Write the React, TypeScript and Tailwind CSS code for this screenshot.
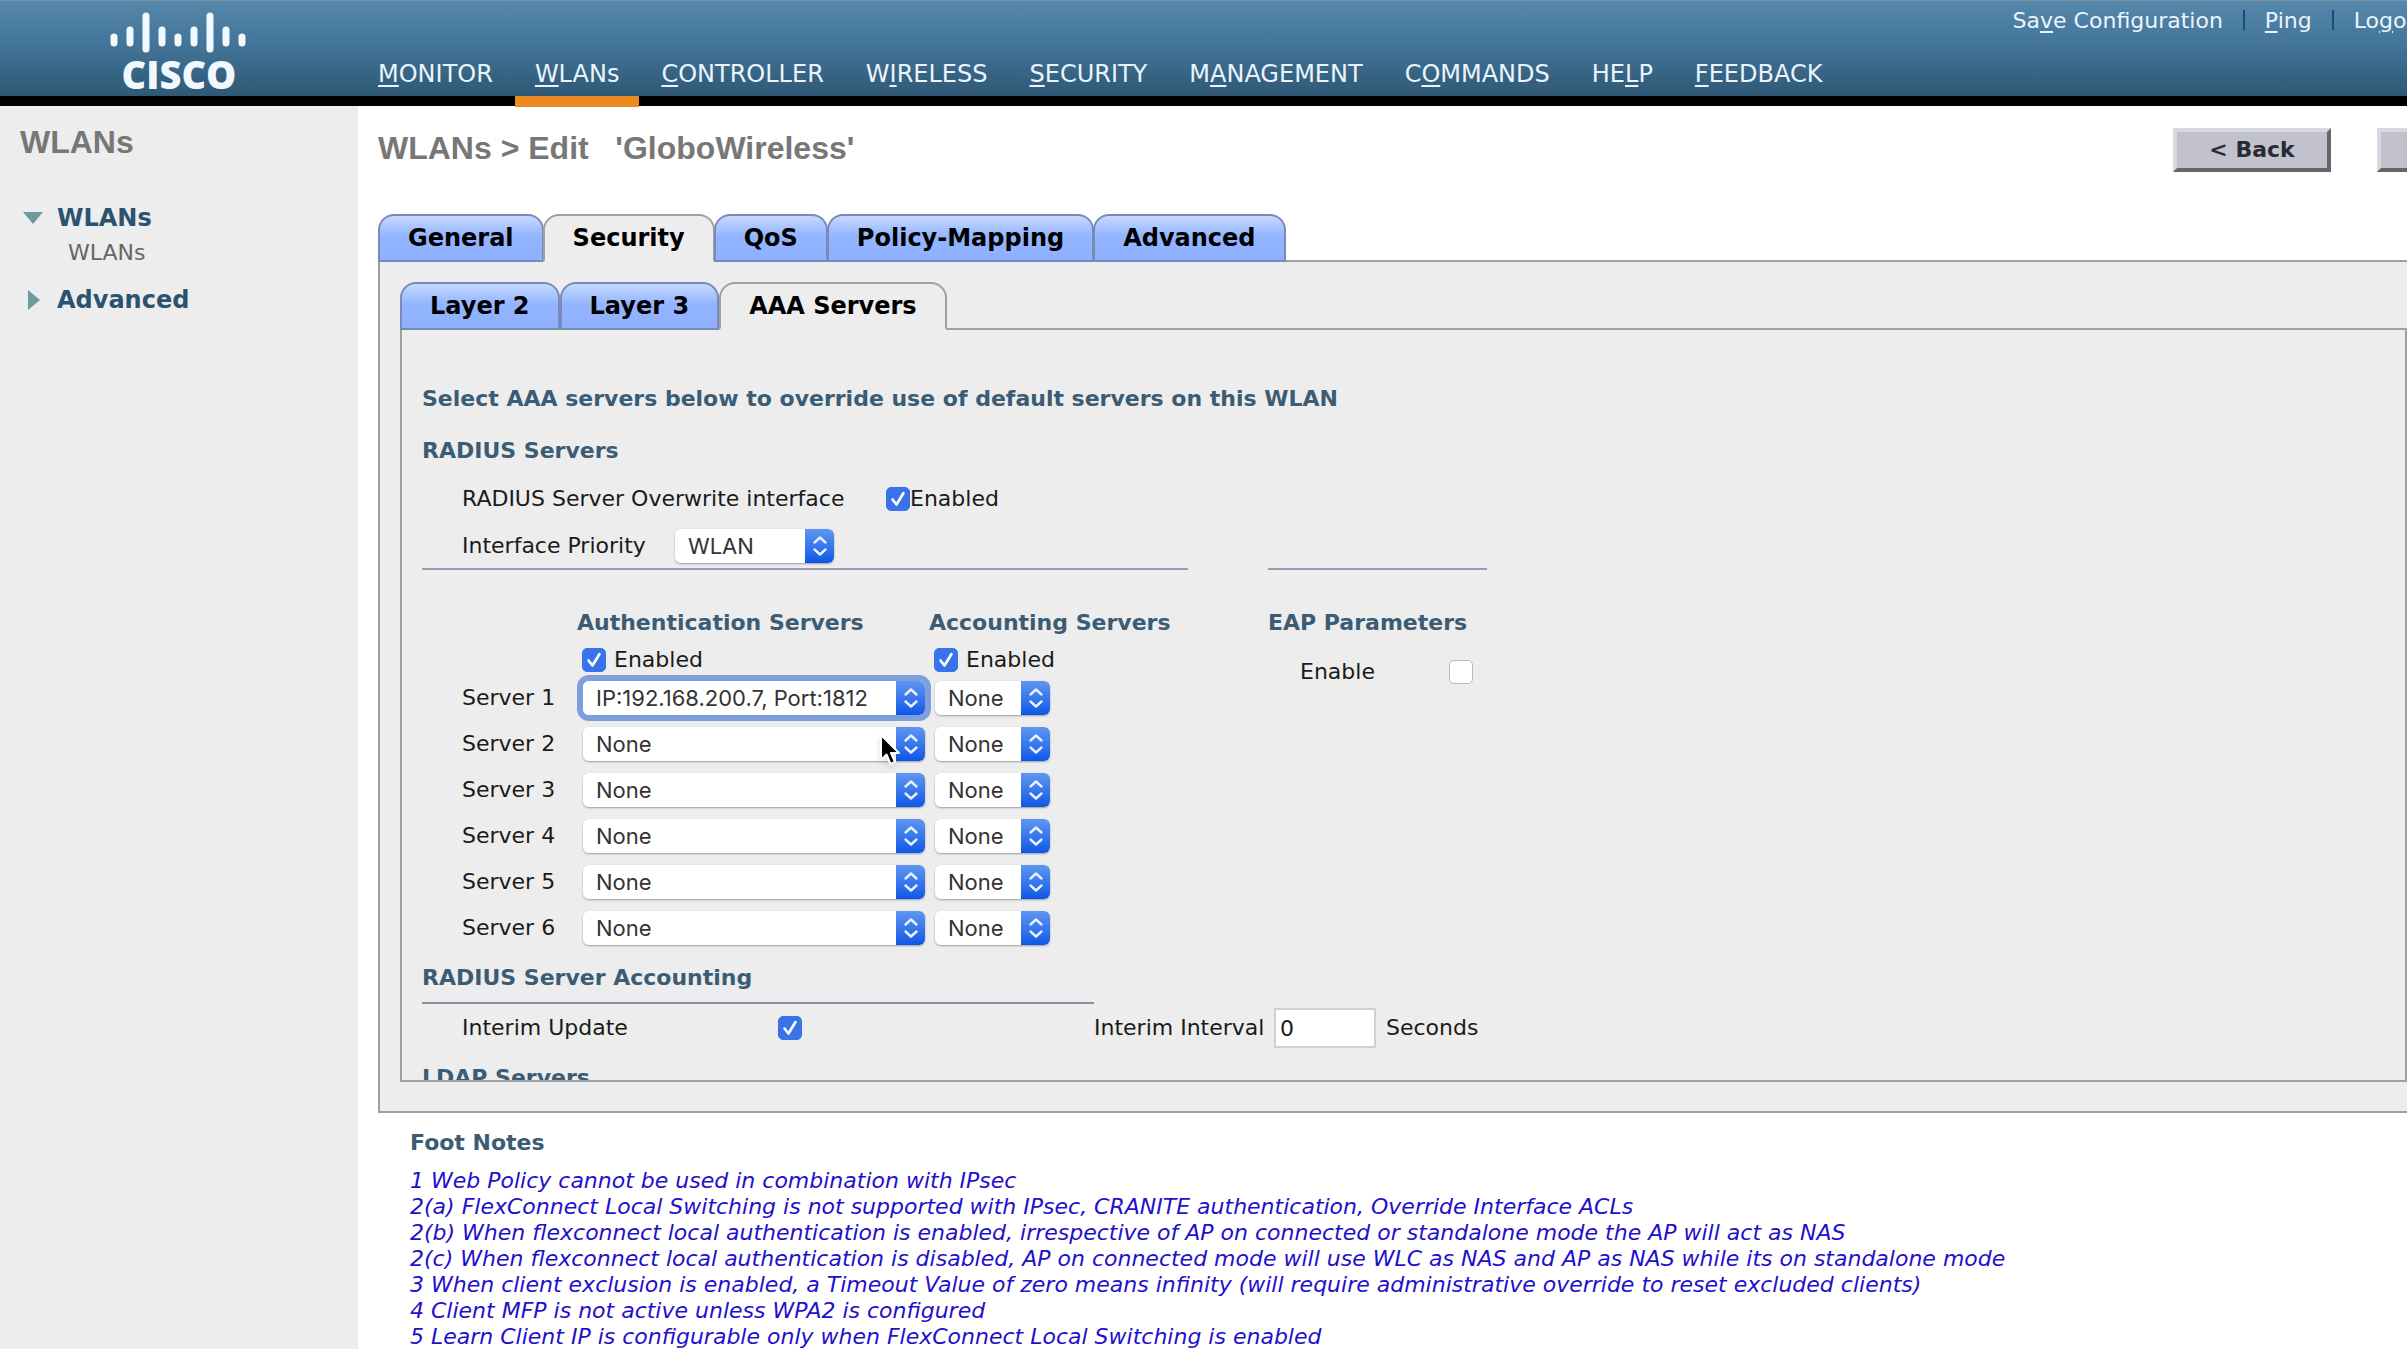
import React from "react";

type NavItem = { before: string; key: string; after: string; active?: boolean };

const NAV: NavItem[] = [
  { before: "", key: "M", after: "ONITOR" },
  { before: "", key: "W", after: "LANs", active: true },
  { before: "", key: "C", after: "ONTROLLER" },
  { before: "W", key: "I", after: "RELESS" },
  { before: "", key: "S", after: "ECURITY" },
  { before: "M", key: "A", after: "NAGEMENT" },
  { before: "C", key: "O", after: "MMANDS" },
  { before: "HE", key: "L", after: "P" },
  { before: "", key: "F", after: "EEDBACK" },
];

const NOTES = [
  "1 Web Policy cannot be used in combination with IPsec",
  "2(a) FlexConnect Local Switching is not supported with IPsec, CRANITE authentication, Override Interface ACLs",
  "2(b) When flexconnect local authentication is enabled, irrespective of AP on connected or standalone mode the AP will act as NAS",
  "2(c) When flexconnect local authentication is disabled, AP on connected mode will use WLC as NAS and AP as NAS while its on standalone mode",
  "3 When client exclusion is enabled, a Timeout Value of zero means infinity (will require administrative override to reset excluded clients)",
  "4 Client MFP is not active unless WPA2 is configured",
  "5 Learn Client IP is configurable only when FlexConnect Local Switching is enabled",
];

function Hotkey({ before, k, after }: { before: string; k: string; after: string }) {
  return (
    <>
      {before}
      <span className="underline decoration-2 underline-offset-[3px]">{k}</span>
      {after}
    </>
  );
}

function Logo() {
  const bars: [number, number, number][] = [
    [3, 21, 34], [19, 14, 34], [35, 0, 40], [51, 14, 34], [67, 21, 34],
    [83, 14, 34], [99, 0, 40], [115, 14, 34], [131, 21, 34],
  ];
  return (
    <svg className="overflow-visible" width="134" height="84" viewBox="0 0 134 84" role="img" aria-label="Cisco">
      {bars.map(([x, y1, y2]) => (
        <line key={x} x1={x} x2={x} y1={y1 + 4} y2={y2 - 3} stroke="#f1f8fe" strokeWidth="7" strokeLinecap="round" />
      ))}
      <text x="68" y="77" textAnchor="middle" fontSize="38" fontWeight="800" fill="#f1f8fe" fontFamily="'Open Sans', sans-serif">
        CISCO
      </text>
    </svg>
  );
}

function Tabs({ items, active, label, spacing = "" }: { items: string[]; active: string; label: string; spacing?: string }) {
  return (
    <div role="tablist" aria-label={label} className={"relative -mb-0.5 flex pr-px " + spacing}>
      {items.map((t) => (
        <button
          key={t}
          role="tab"
          aria-selected={t === active}
          className={
            "-mr-px h-12 rounded-t-[16px] border-2 px-7 pb-px text-2xl font-bold leading-9 text-black " +
            (t === active
              ? "border-[#a0a0a0] border-b-[#ededed] bg-[#ededed]"
              : "border-[#7a8ab8] bg-linear-to-b from-[#c0d6ff] from-5% via-[#94b5ff] via-45% to-[#8db0ff]")
          }
        >
          {t}
        </button>
      ))}
    </div>
  );
}

function Check({ id, checked = false }: { id: string; checked?: boolean }) {
  return (
    <span className="grid size-6 shrink-0">
      <input
        id={id}
        type="checkbox"
        defaultChecked={checked}
        className="peer col-start-1 row-start-1 size-6 appearance-none rounded-[5px] border border-[#b9b9b9] bg-white checked:border-[#3a72ea] checked:bg-[#3a72ea]"
      />
      <svg
        viewBox="0 0 24 24"
        className="pointer-events-none col-start-1 row-start-1 hidden size-6 peer-checked:block"
        fill="none"
        stroke="white"
        strokeWidth="2.6"
        strokeLinecap="round"
        strokeLinejoin="round"
        aria-hidden="true"
      >
        <path d="M6.5 12.5 10.5 17.5 17.5 6" />
      </svg>
    </span>
  );
}

function Select({ id, label, value, width, focused = false }: { id: string; label?: string; value: string; width: string; focused?: boolean }) {
  return (
    <span
      className={
        "relative block h-[34px] rounded-md " +
        width +
        (focused ? " shadow-[0_0_0_6px_#7f9fdc]" : " shadow-[0_1px_2px_rgba(0,0,0,0.35)]")
      }
    >
      <select
        id={id}
        aria-label={label}
        defaultValue={value}
        className="h-full w-full appearance-none rounded-md bg-white pl-[13px] pr-8 font-['Inter',sans-serif] text-[22px] leading-[34px] text-[#333] outline-none"
      >
        <option>{value}</option>
      </select>
      <span className="pointer-events-none absolute inset-y-0 right-0 flex w-[29px] items-center justify-center rounded-r-md bg-linear-to-b from-[#5f96f0] to-[#0d56e6]">
        <svg width="16" height="22" viewBox="0 0 16 22" fill="none" stroke="#e6f0ff" strokeWidth="2.4" strokeLinecap="round" strokeLinejoin="round" aria-hidden="true">
          <path d="M2.5 7.5 8 2.5 13.5 7.5M2.5 14.5 8 19.5 13.5 14.5" />
        </svg>
      </span>
    </span>
  );
}

function Pointer() {
  return (
    <svg className="pointer-events-none absolute left-[302px] top-3 z-10 drop-shadow-md" width="22" height="34" viewBox="0 0 22 34" aria-hidden="true">
      <path d="M2 2 2 27 7.5 21.5 11.5 31 16 29 12 20 20 20Z" fill="#000" stroke="#fff" strokeWidth="2" strokeLinejoin="round" />
    </svg>
  );
}

function PushButton({ children }: { children: React.ReactNode }) {
  return (
    <button className="h-11 w-[158px] shrink-0 border-4 border-b-[#666] border-l-[#d8d8e0] border-r-[#666] border-t-[#d8d8e0] bg-[#c2c2cf] text-[22px] font-bold leading-9 text-[#2a2a35]">
      {children}
    </button>
  );
}

function Header() {
  return (
    <header className="border-b-[10px] border-black">
      <div className="flex h-24 border-t border-[#7b95a3] bg-linear-to-b from-[#5588ab] via-[#43759a] via-45% to-[#2f5875] text-[#eaf4fc]">
        <div className="flex w-[358px] shrink-0 pl-[111px] pt-[11px]">
          <Logo />
        </div>
        <div className="flex min-w-0 grow flex-col justify-between">
          <div className="-mr-[22px] flex h-[38px] items-center justify-end gap-5 whitespace-nowrap text-[22px]">
            <a href="#save"><Hotkey before="Sa" k="v" after="e Configuration" /></a>
            <span className="h-5 w-0.5 bg-[#1f4a7c]" />
            <a href="#ping"><Hotkey before="" k="P" after="ing" /></a>
            <span className="h-5 w-0.5 bg-[#1f4a7c]" />
            <a href="#logout"><Hotkey before="Lo" k="g" after="out" /></a>
          </div>
          <nav className="flex gap-0.5 whitespace-nowrap text-2xl leading-[44px]" aria-label="Main">
            {NAV.map((n) => (
              <a
                key={n.key + n.after}
                href={"#" + n.after.toLowerCase()}
                className={
                  "relative px-5 " +
                  (n.active ? "after:absolute after:inset-x-0 after:top-full after:h-[11px] after:bg-[#ea8a1f]" : "")
                }
              >
                <Hotkey before={n.before} k={n.key} after={n.after} />
              </a>
            ))}
          </nav>
        </div>
      </div>
    </header>
  );
}

function Sidebar() {
  return (
    <aside className="w-[358px] shrink-0 bg-[#ededed] pl-5 pt-3.5">
      <h2 className="font-['Liberation_Sans',Arial,sans-serif] text-[32px] font-bold leading-[44px] text-[#777]">WLANs</h2>
      <ul className="pt-[34px]">
        <li>
          <a href="#wlans" className="flex h-10 items-center text-2xl font-bold text-[#2b526f]">
            <svg className="ml-0.5 mr-[13px]" width="22" height="14" viewBox="0 0 22 14" aria-hidden="true">
              <path d="M1 1H21L11 13Z" fill="#6e9a9b" />
            </svg>
            WLANs
          </a>
          <a href="#wlans-list" className="flex h-7 items-center pl-12 text-[22px] text-[#666]">WLANs</a>
        </li>
        <li className="pt-3">
          <a href="#advanced" className="flex h-11 items-center text-2xl font-bold text-[#2b526f]">
            <svg className="ml-[7px] mr-4" width="14" height="22" viewBox="0 0 14 22" aria-hidden="true">
              <path d="M1 1V21L13 11Z" fill="#6e9a9b" />
            </svg>
            Advanced
          </a>
        </li>
      </ul>
    </aside>
  );
}

function ServerTable() {
  return (
    <table className="ml-10 border-collapse text-left">
      <thead>
        <tr className="h-[42px] text-[#3b5c74]">
          <td className="w-[115px] p-0" />
          <th scope="col" className="w-[352px] p-0 font-bold">Authentication Servers</th>
          <th scope="col" className="p-0 font-bold">Accounting Servers</th>
        </tr>
      </thead>
      <tbody>
        <tr className="h-[31px] leading-[31px]">
          <td className="p-0" />
          <td className="p-0 pl-[5px]">
            <label htmlFor="auth-on" className="flex items-center gap-2"><Check id="auth-on" checked />Enabled</label>
          </td>
          <td className="p-0 pl-[5px]">
            <label htmlFor="acct-on" className="flex items-center gap-2"><Check id="acct-on" checked />Enabled</label>
          </td>
        </tr>
        {[1, 2, 3, 4, 5, 6].map((n) => (
          <tr key={n} className="h-[46px]">
            <th scope="row" className="p-0 font-normal">Server {n}</th>
            <td className="relative p-0 pl-1.5">
              <Select id={"auth-" + n} label={"Authentication server " + n} value={n === 1 ? "IP:192.168.200.7, Port:1812" : "None"} width="w-[342px]" focused={n === 1} />
              {n === 2 && <Pointer />}
            </td>
            <td className="p-0 pl-1.5">
              <Select id={"acct-" + n} label={"Accounting server " + n} value="None" width="w-[115px]" />
            </td>
          </tr>
        ))}
      </tbody>
    </table>
  );
}

function AaaPanel() {
  return (
    <div className="h-[754px] overflow-hidden border-2 border-[#a0a0a0] pl-5 pt-[53px] text-[22px] leading-8 text-[#1a1a1a]">
      <h3 className="font-bold text-[#3b5c74]">Select AAA servers below to override use of default servers on this WLAN</h3>
      <h3 className="pt-5 font-bold text-[#3b5c74]">RADIUS Servers</h3>
      <div className="ml-10 mt-2 flex h-12 items-center">
        <label htmlFor="overwrite" className="w-[424px]">RADIUS Server Overwrite interface</label>
        <Check id="overwrite" checked />
        <span>Enabled</span>
      </div>
      <div className="ml-10 flex h-[45px] items-center">
        <label htmlFor="priority" className="w-[213px]">Interface Priority</label>
        <Select id="priority" value="WLAN" width="w-[159px]" />
      </div>
      <div className="flex gap-20">
        <section className="w-[766px] border-t-2 border-[#9a9cb4] pt-8">
          <ServerTable />
        </section>
        <section className="w-[219px] border-t-2 border-[#9a9cb4] pt-8">
          <h3 className="font-bold leading-[42px] text-[#3b5c74]">EAP Parameters</h3>
          <div className="flex h-14 items-center justify-between pl-8 pr-3.5">
            <label htmlFor="eap">Enable</label>
            <Check id="eap" />
          </div>
        </section>
      </div>
      <h3 className="w-[672px] border-b-2 border-[#8494a6] pt-0.5 font-bold leading-[49px] text-[#3b5c74]">RADIUS Server Accounting</h3>
      <div className="ml-10 flex h-12 items-center">
        <label htmlFor="interim" className="w-[316px]">Interim Update</label>
        <div className="w-[316px]"><Check id="interim" checked /></div>
        <label htmlFor="interval" className="w-[180px] whitespace-nowrap">Interim Interval</label>
        <input id="interval" defaultValue="0" className="h-10 w-[102px] border-2 border-[#d0d0d0] bg-white pl-1 outline-none" />
        <span className="pl-2.5">Seconds</span>
      </div>
      <h3 className="font-bold leading-[52px] text-[#3b5c74]">LDAP Servers</h3>
    </div>
  );
}

export default function App() {
  return (
    <div className="flex h-screen flex-col overflow-hidden bg-white font-['DejaVu_Sans',Verdana,sans-serif]">
      <Header />
      <div className="flex min-h-0 grow">
        <Sidebar />
        <main className="min-w-0 grow pl-5">
          <div className="flex items-start justify-between pt-[22px]">
            <h1 className="whitespace-pre font-['Liberation_Sans',Arial,sans-serif] text-[32px] font-bold leading-10 text-[#777]">
              {"WLANs > Edit   'GloboWireless'"}
            </h1>
            <div className="-mr-[128px] flex gap-[46px]">
              <PushButton>&lt; Back</PushButton>
              <PushButton>Apply</PushButton>
            </div>
          </div>
          <div className="-mr-[22px] pt-[42px]">
            <Tabs label="WLAN settings" items={["General", "Security", "QoS", "Policy-Mapping", "Advanced"]} active="Security" />
            <div className="border-2 border-[#a0a0a0] bg-[#ededed] px-5 pb-[29px] pt-5">
              <Tabs label="Security settings" items={["Layer 2", "Layer 3", "AAA Servers"]} active="AAA Servers" spacing="gap-px" />
              <AaaPanel />
            </div>
          </div>
          <section className="whitespace-nowrap pl-8 pt-[15px] text-[22px]">
            <h3 className="pb-2.5 font-bold leading-[30px] text-[#3b5c74]">Foot Notes</h3>
            {NOTES.map((n) => (
              <p key={n} className="italic leading-[26px] text-[#1f10cc]">{n}</p>
            ))}
          </section>
        </main>
      </div>
    </div>
  );
}
